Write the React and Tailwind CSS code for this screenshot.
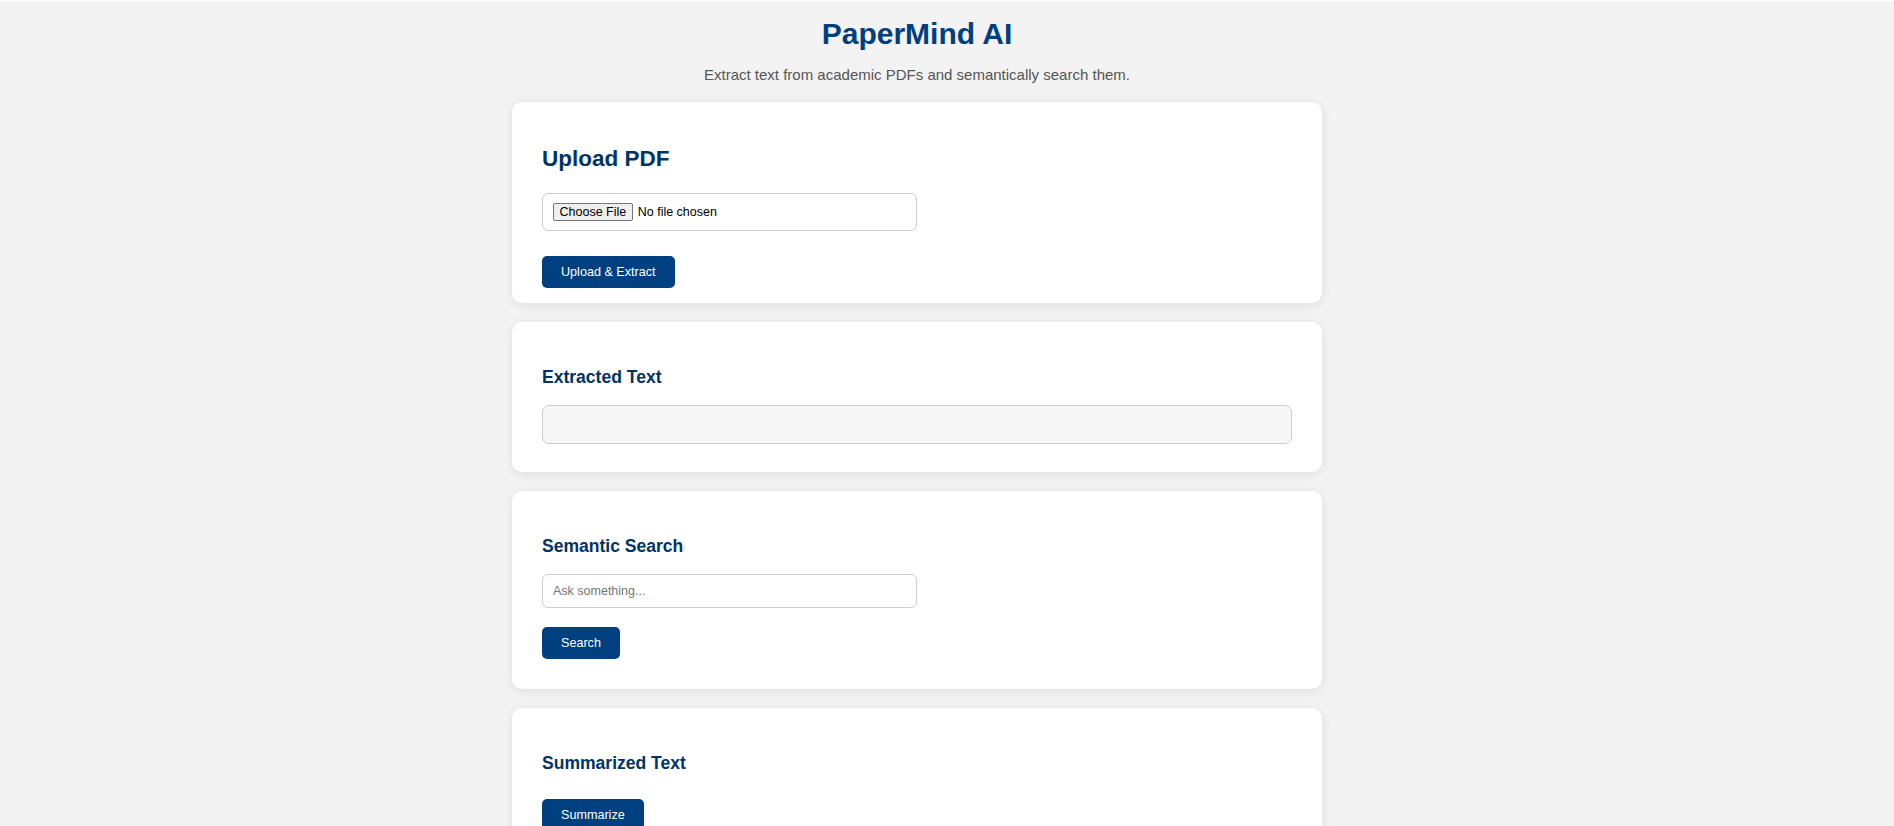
import React from "react";

function Card({ children, className = "" }) {
  return (
    <section
      className={
        "bg-white rounded-[10px] shadow-[0_2px_12px_rgba(0,0,0,0.09)] px-[30px] pt-[30px] " +
        className
      }
    >
      {children}
    </section>
  );
}

function H3({ children }) {
  return (
    <h3 className="mt-[15px] text-[17.55px] leading-[21px] font-bold text-[#003366]">
      {children}
    </h3>
  );
}

function Btn({ children, className = "" }) {
  return (
    <button
      type="button"
      className={
        "block h-[32px] px-[19px] rounded-[5px] bg-[#004080] text-white text-[12.6px] leading-[15px] " +
        className
      }
    >
      {children}
    </button>
  );
}

export default function App() {
  return (
    <div className="min-h-screen bg-[#f3f3f3] border-t border-white font-['Liberation_Sans',Arial,sans-serif] pr-[60px]">
      <div className="mx-auto w-[810px]">
        <h1 className="mt-[15px] text-center text-[30px] leading-[36px] font-bold text-[#004080]">
          PaperMind AI
        </h1>
        <p className="mt-[14px] text-center text-[15px] leading-[18px] text-[#555555]">
          Extract text from academic PDFs and semantically search them.
        </p>

        <div className="mt-[18px] flex flex-col gap-[19px] pb-[40px]">
          <Card className="pb-[15px]">
            <h2 className="mt-[14px] text-[22.5px] leading-[26px] font-bold text-[#003366]">
              Upload PDF
            </h2>
            <label className="mt-[21px] flex items-center w-[375px] h-[38px] border border-[#cccccc] rounded-[6px] px-[10px] text-[12.5px] leading-[15px] text-black cursor-pointer">
              <input type="file" accept="application/pdf" className="hidden" />
              <span className="h-[18px] flex items-center px-[5.5px] bg-[#efefef] border border-[#767676] rounded-[2px]">
                Choose File
              </span>
              <span className="ml-[5px]">No file chosen</span>
            </label>
            <Btn className="mt-[25px]">Upload &amp; Extract</Btn>
          </Card>

          <Card className="pb-[28px]">
            <H3>Extracted Text</H3>
            <div className="mt-[17px] h-[39px] w-full bg-[#f7f7f7] border border-[#cccccc] rounded-[7px]" />
          </Card>

          <Card className="pb-[30px]">
            <H3>Semantic Search</H3>
            <input
              type="text"
              placeholder="Ask something..."
              className="mt-[17px] block w-[375px] h-[34px] border border-[#cccccc] rounded-[6px] px-[10px] text-[12.5px] text-black placeholder:text-[#757575] outline-none"
            />
            <Btn className="mt-[19px]">Search</Btn>
          </Card>

          <Card className="pb-[30px]">
            <H3>Summarized Text</H3>
            <Btn className="mt-[25px]">Summarize</Btn>
          </Card>
        </div>
      </div>
    </div>
  );
}
